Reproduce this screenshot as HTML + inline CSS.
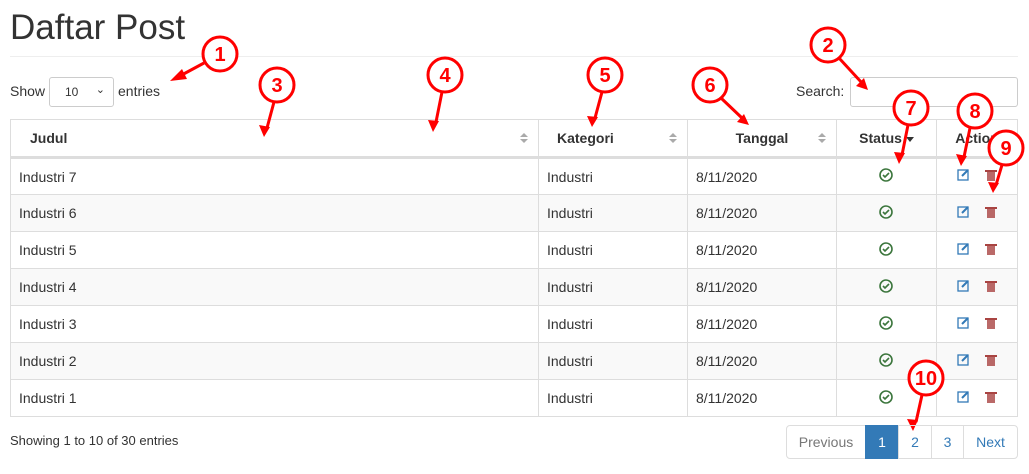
<!DOCTYPE html>
<html><head><style>
*{box-sizing:border-box;margin:0;padding:0}
body{width:1029px;height:474px;background:#fff;font-family:"Liberation Sans",Arial,sans-serif;color:#333;position:relative;overflow:hidden;font-size:14px}
.a{position:absolute}
h1{position:absolute;left:10px;top:8px;font-size:35px;font-weight:400;color:#333}
table{position:absolute;left:10px;top:119px;width:1008px;border-collapse:collapse;font-size:14px}
td,th{border:1px solid #ddd;height:37px;padding:0 8px}
th{font-weight:bold;height:38px;border-bottom:3px solid #ddd;position:relative}
tr:nth-child(odd) td{background:#f9f9f9}
td.c{color:transparent}
.sort{position:absolute;right:10px;top:13px;width:8px}
.sort:before{content:"";position:absolute;left:0;top:0;border:4px solid transparent;border-bottom:4px solid #aaa;border-top:0}
.sort:after{content:"";position:absolute;left:0;top:6px;border:4px solid transparent;border-top:4px solid #aaa;border-bottom:0}
.pg{position:absolute;top:425px;height:34px;border:1px solid #ddd;color:#337ab7;font-size:14px;line-height:32px;text-align:center}
</style></head><body>
<h1>Daftar Post</h1>
<div class="a" style="left:10px;top:56px;width:1008px;height:1px;background:#eee"></div>
<div class="a" style="left:10px;top:83px">Show</div>
<div class="a" style="left:49px;top:77px;width:65px;height:30px;border:1px solid #ccc;border-radius:3px;font-size:12px;padding:7px 0 0 15px">10<span style="position:absolute;right:8px;top:5px;font-size:11px">&#x2304;</span></div>
<div class="a" style="left:118px;top:83px">entries</div>
<div class="a" style="left:796px;top:83px">Search:</div>
<div class="a" style="left:850px;top:77px;width:168px;height:30px;border:1px solid #ccc;border-radius:3px"></div>
<table>
<tr><th style="width:528px;text-align:left;padding-left:19px">Judul<span class="sort"></span></th><th style="width:149px;text-align:left;padding-left:18px">Kategori<span class="sort"></span></th><th style="width:149px;text-align:center">Tanggal<span class="sort"></span></th><th style="width:100px;text-align:center">Status <span style="display:inline-block;border:4px solid transparent;border-top:5px solid #333;border-bottom:0;vertical-align:middle"></span></th><th style="text-align:center">Action</th></tr>
<tr><td>Industri 7</td><td>Industri</td><td>8/11/2020</td><td class="c">✓</td><td></td></tr>
<tr><td>Industri 6</td><td>Industri</td><td>8/11/2020</td><td class="c">✓</td><td></td></tr>
<tr><td>Industri 5</td><td>Industri</td><td>8/11/2020</td><td class="c">✓</td><td></td></tr>
<tr><td>Industri 4</td><td>Industri</td><td>8/11/2020</td><td class="c">✓</td><td></td></tr>
<tr><td>Industri 3</td><td>Industri</td><td>8/11/2020</td><td class="c">✓</td><td></td></tr>
<tr><td>Industri 2</td><td>Industri</td><td>8/11/2020</td><td class="c">✓</td><td></td></tr>
<tr><td>Industri 1</td><td>Industri</td><td>8/11/2020</td><td class="c">✓</td><td></td></tr>
</table>
<svg class="a" style="left:0;top:0" width="1029" height="474">
<g id="icons">
<g id="r"><circle cx="886" cy="175" r="6" fill="none" stroke="#3c763d" stroke-width="1.6"/><path d="M883 175l2 2 4-4" stroke="#3c763d" stroke-width="1.6" fill="none"/>
<rect x="958" y="170" width="10" height="10" fill="none" stroke="#337ab7" stroke-width="1.3"/><path d="M962 176l6-6" stroke="#337ab7" stroke-width="2"/>
<rect x="987" y="172" width="8" height="9" fill="#a94442" opacity=".8"/><rect x="985" y="170" width="12" height="2" fill="#a94442"/></g>
<use href="#r" y="37"/><use href="#r" y="74"/><use href="#r" y="111"/><use href="#r" y="148"/><use href="#r" y="185"/><use href="#r" y="222"/>
</g>
<g fill="none" stroke="#f00" stroke-width="3">
<circle cx="220" cy="54" r="17" fill="#fff"/><circle cx="828" cy="45" r="17" fill="#fff"/><circle cx="277" cy="85" r="17" fill="#fff"/><circle cx="445" cy="75" r="17" fill="#fff"/><circle cx="605" cy="75" r="17" fill="#fff"/><circle cx="710" cy="85" r="17" fill="#fff"/><circle cx="911" cy="108" r="17" fill="#fff"/><circle cx="975" cy="111" r="17" fill="#fff"/><circle cx="1006" cy="148" r="17" fill="#fff"/><circle cx="926" cy="378" r="17" fill="#fff"/>
<path d="M204 63L178 77M839 58L862 83M274 102L267 128M442 92L436 122M602 92L595 118M721 98L742 118M908 125L902 155M970 128L964 157M1002 165L996 185M922 395L916 422"/>
</g>
<g fill="#f00">
<path d="M170 81l12-12 5 10z"/><path d="M868 90l-12-4 8-8z"/><path d="M264 137l-5-12 11 2z"/><path d="M433 132l-5-12 11 1z"/><path d="M592 127l-5-11 11 1z"/><path d="M749 125l-12-3 7-8z"/><path d="M899 164l-5-12 11 1z"/><path d="M961 166l-5-12 11 2z"/><path d="M993 193l-5-11 11 1z"/><path d="M913 431l-6-12 11 1z"/>
</g>
<g fill="#f00" font-family="Liberation Sans" font-weight="bold" font-size="20" text-anchor="middle">
<text x="220" y="61">1</text><text x="828" y="52">2</text><text x="277" y="92">3</text><text x="445" y="82">4</text><text x="605" y="82">5</text><text x="710" y="92">6</text><text x="911" y="115">7</text><text x="975" y="118">8</text><text x="1006" y="155">9</text><text x="926" y="385">10</text>
</g>
</svg>
<div class="a" style="left:10px;top:433px;font-size:13px">Showing 1 to 10 of 30 entries</div>
<div class="pg" style="left:786px;width:80px;border-radius:4px 0 0 4px;color:#777">Previous</div>
<div class="pg" style="left:865px;width:34px;background:#337ab7;border-color:#337ab7;color:#fff">1</div>
<div class="pg" style="left:898px;width:34px">2</div>
<div class="pg" style="left:931px;width:33px">3</div>
<div class="pg" style="left:963px;width:55px;border-radius:0 4px 4px 0">Next</div>
</body></html>
